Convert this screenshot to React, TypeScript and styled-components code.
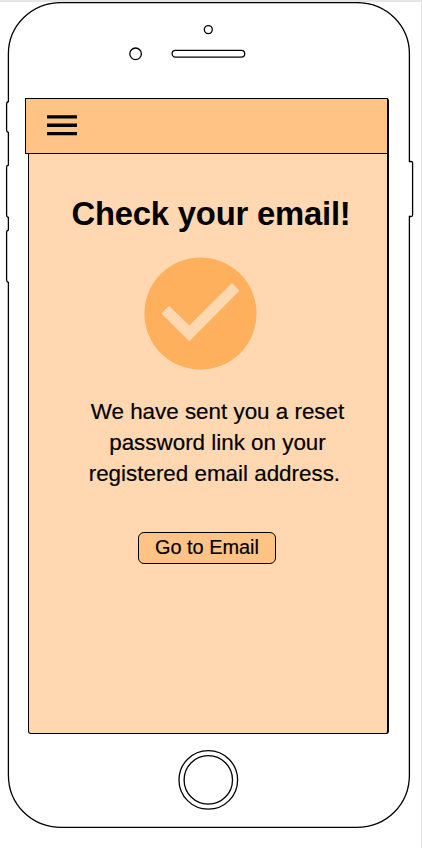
import React from "react";
import styled, { createGlobalStyle } from "styled-components";

const ink = "#000";
const stroke = 1.3;

const GlobalStyle = createGlobalStyle`
  * { box-sizing: border-box; }
  body {
    margin: 0;
    background: #fff;
    font-family: "Liberation Sans", Arial, Helvetica, sans-serif;
    color: ${ink};
  }
`;

const Canvas = styled.div`
  width: 422px;
  height: 848px;
  overflow: hidden;
  background: #fff;
  border-top: 2px solid #e6e6e6;
  border-right: 1px solid #e2e2e2;
`;

const Phone = styled.div`
  position: relative;
  height: 846px;
  display: grid;
  grid-template-rows: 95px 637px 1fr;
`;

const Bezel = styled.svg`
  position: absolute;
  left: 0;
  top: -2px;
  pointer-events: none;
`;

const Earpiece = styled.div`
  display: flex;
  align-items: flex-start;
  padding-left: 129px;
`;

const Camera = styled.svg`
  display: block;
  margin-top: 45px;
`;

const Speaker = styled.svg`
  display: block;
  margin: 22px 0 0 28px;
`;

const Screen = styled.main`
  width: 361px;
  margin-left: 28px;
  background: #ffd8b1;
  border: 1px solid ${ink};
  border-right-width: 2px;
  border-radius: 3px;
  margin-top: 1px;
  height: 636px;
  display: flex;
  flex-direction: column;
  align-items: center;
`;

const TopBar = styled.header`
  align-self: flex-start;
  flex: none;
  width: 363px;
  height: 56px;
  margin: -1px 0 0 -4px;
  padding: 16px 0 0 21px;
  background: #ffc386;
  border: 1px solid ${ink};
`;

const MenuButton = styled.button`
  display: block;
  padding: 0;
  border: 0;
  background: none;
`;

const MenuIcon = styled.svg`
  display: block;
`;

const Title = styled.h1`
  margin: 40px 0 0 6px;
  font-size: 32.8px;
  line-height: 40px;
  font-weight: 700;
  letter-spacing: -0.2px;
  white-space: nowrap;
`;

const SuccessMark = styled.svg`
  display: block;
  margin: 23px 16px 0 0;
`;

const Message = styled.p`
  margin: 26px 0 0 19px;
  font-size: 22.4px;
  line-height: 31px;
  text-align: center;
  white-space: pre;
  -webkit-text-stroke: 0.2px ${ink};
`;

const EmailButton = styled.button`
  width: 138px;
  height: 32px;
  margin: 43px 2px 0 0;
  padding: 0 0 2px;
  border: 1px solid ${ink};
  border-radius: 6px;
  background: #ffc386;
  color: ${ink};
  font: 19.9px/28px "Liberation Sans", Arial, Helvetica, sans-serif;
  -webkit-text-stroke: 0.2px ${ink};
`;

const HomeButton = styled.svg`
  display: block;
  margin: 15px 0 0 178px;
`;

const bodyOutline =
  "M61.5 2.6H356.5C387 2.6 409.4 26 409.4 54V161.5H411Q412.6 161.5 412.6 163V215Q412.6 216.5 411 216.5H409.4V775C409.4 804 387 827.4 356.5 827.4H61.5C31 827.4 8.4 804 8.4 775V282.5Q6.6 282 6.6 280V232Q6.6 230.5 8.4 230V217.5Q6.6 217 6.6 215V167Q6.6 165.5 8.4 165V132.5Q6.6 132 6.6 130V104Q6.6 102 8.4 101.5V54C8.4 26 31 2.6 61.5 2.6Z";

export default function App() {
  return (
    <>
      <GlobalStyle />
      <Canvas>
        <Phone>
          <Bezel width="421" height="848" fill="none" stroke={ink} strokeWidth={stroke} aria-hidden>
            <path d={bodyOutline} />
          </Bezel>
          <Earpiece>
            <Camera width="14" height="14" fill="none" stroke={ink} strokeWidth={stroke}>
              <circle cx="6.6" cy="6.8" r="5.8" />
            </Camera>
            <Speaker width="76" height="36" fill="none" stroke={ink} strokeWidth={stroke}>
              <circle cx="37.3" cy="5.6" r="4" />
              <rect x="1.1" y="26.4" width="72.6" height="6.7" rx="3.35" />
            </Speaker>
          </Earpiece>
          <Screen>
            <TopBar>
              <MenuButton aria-label="Menu">
                <MenuIcon width="30" height="21" fill={ink}>
                  <path d="M0 0.2H30V3.6H0ZM0 8.6H30V12H0ZM0 16.9H30V20.3H0Z" />
                </MenuIcon>
              </MenuButton>
            </TopBar>
            <Title>Check your email!</Title>
            <SuccessMark width="113" height="113" viewBox="0 0 113 113">
              <circle cx="56.5" cy="56.5" r="56.1" fill="#ffb05c" />
              <path d="M17.3 56.5L25 48.7L45.3 68.6L88 26L95.5 33.8L45.3 84.3Z" fill="#ffd8b1" />
            </SuccessMark>
            <Message>{"We have sent you a reset\npassword link on your\nregistered email address.\u00a0"}</Message>
            <EmailButton>Go to Email</EmailButton>
          </Screen>
          <HomeButton width="61" height="62" fill="none" stroke={ink} strokeWidth={stroke}>
            <circle cx="30.3" cy="30.9" r="29.3" />
            <circle cx="30.3" cy="30.9" r="24.2" />
          </HomeButton>
        </Phone>
      </Canvas>
    </>
  );
}
